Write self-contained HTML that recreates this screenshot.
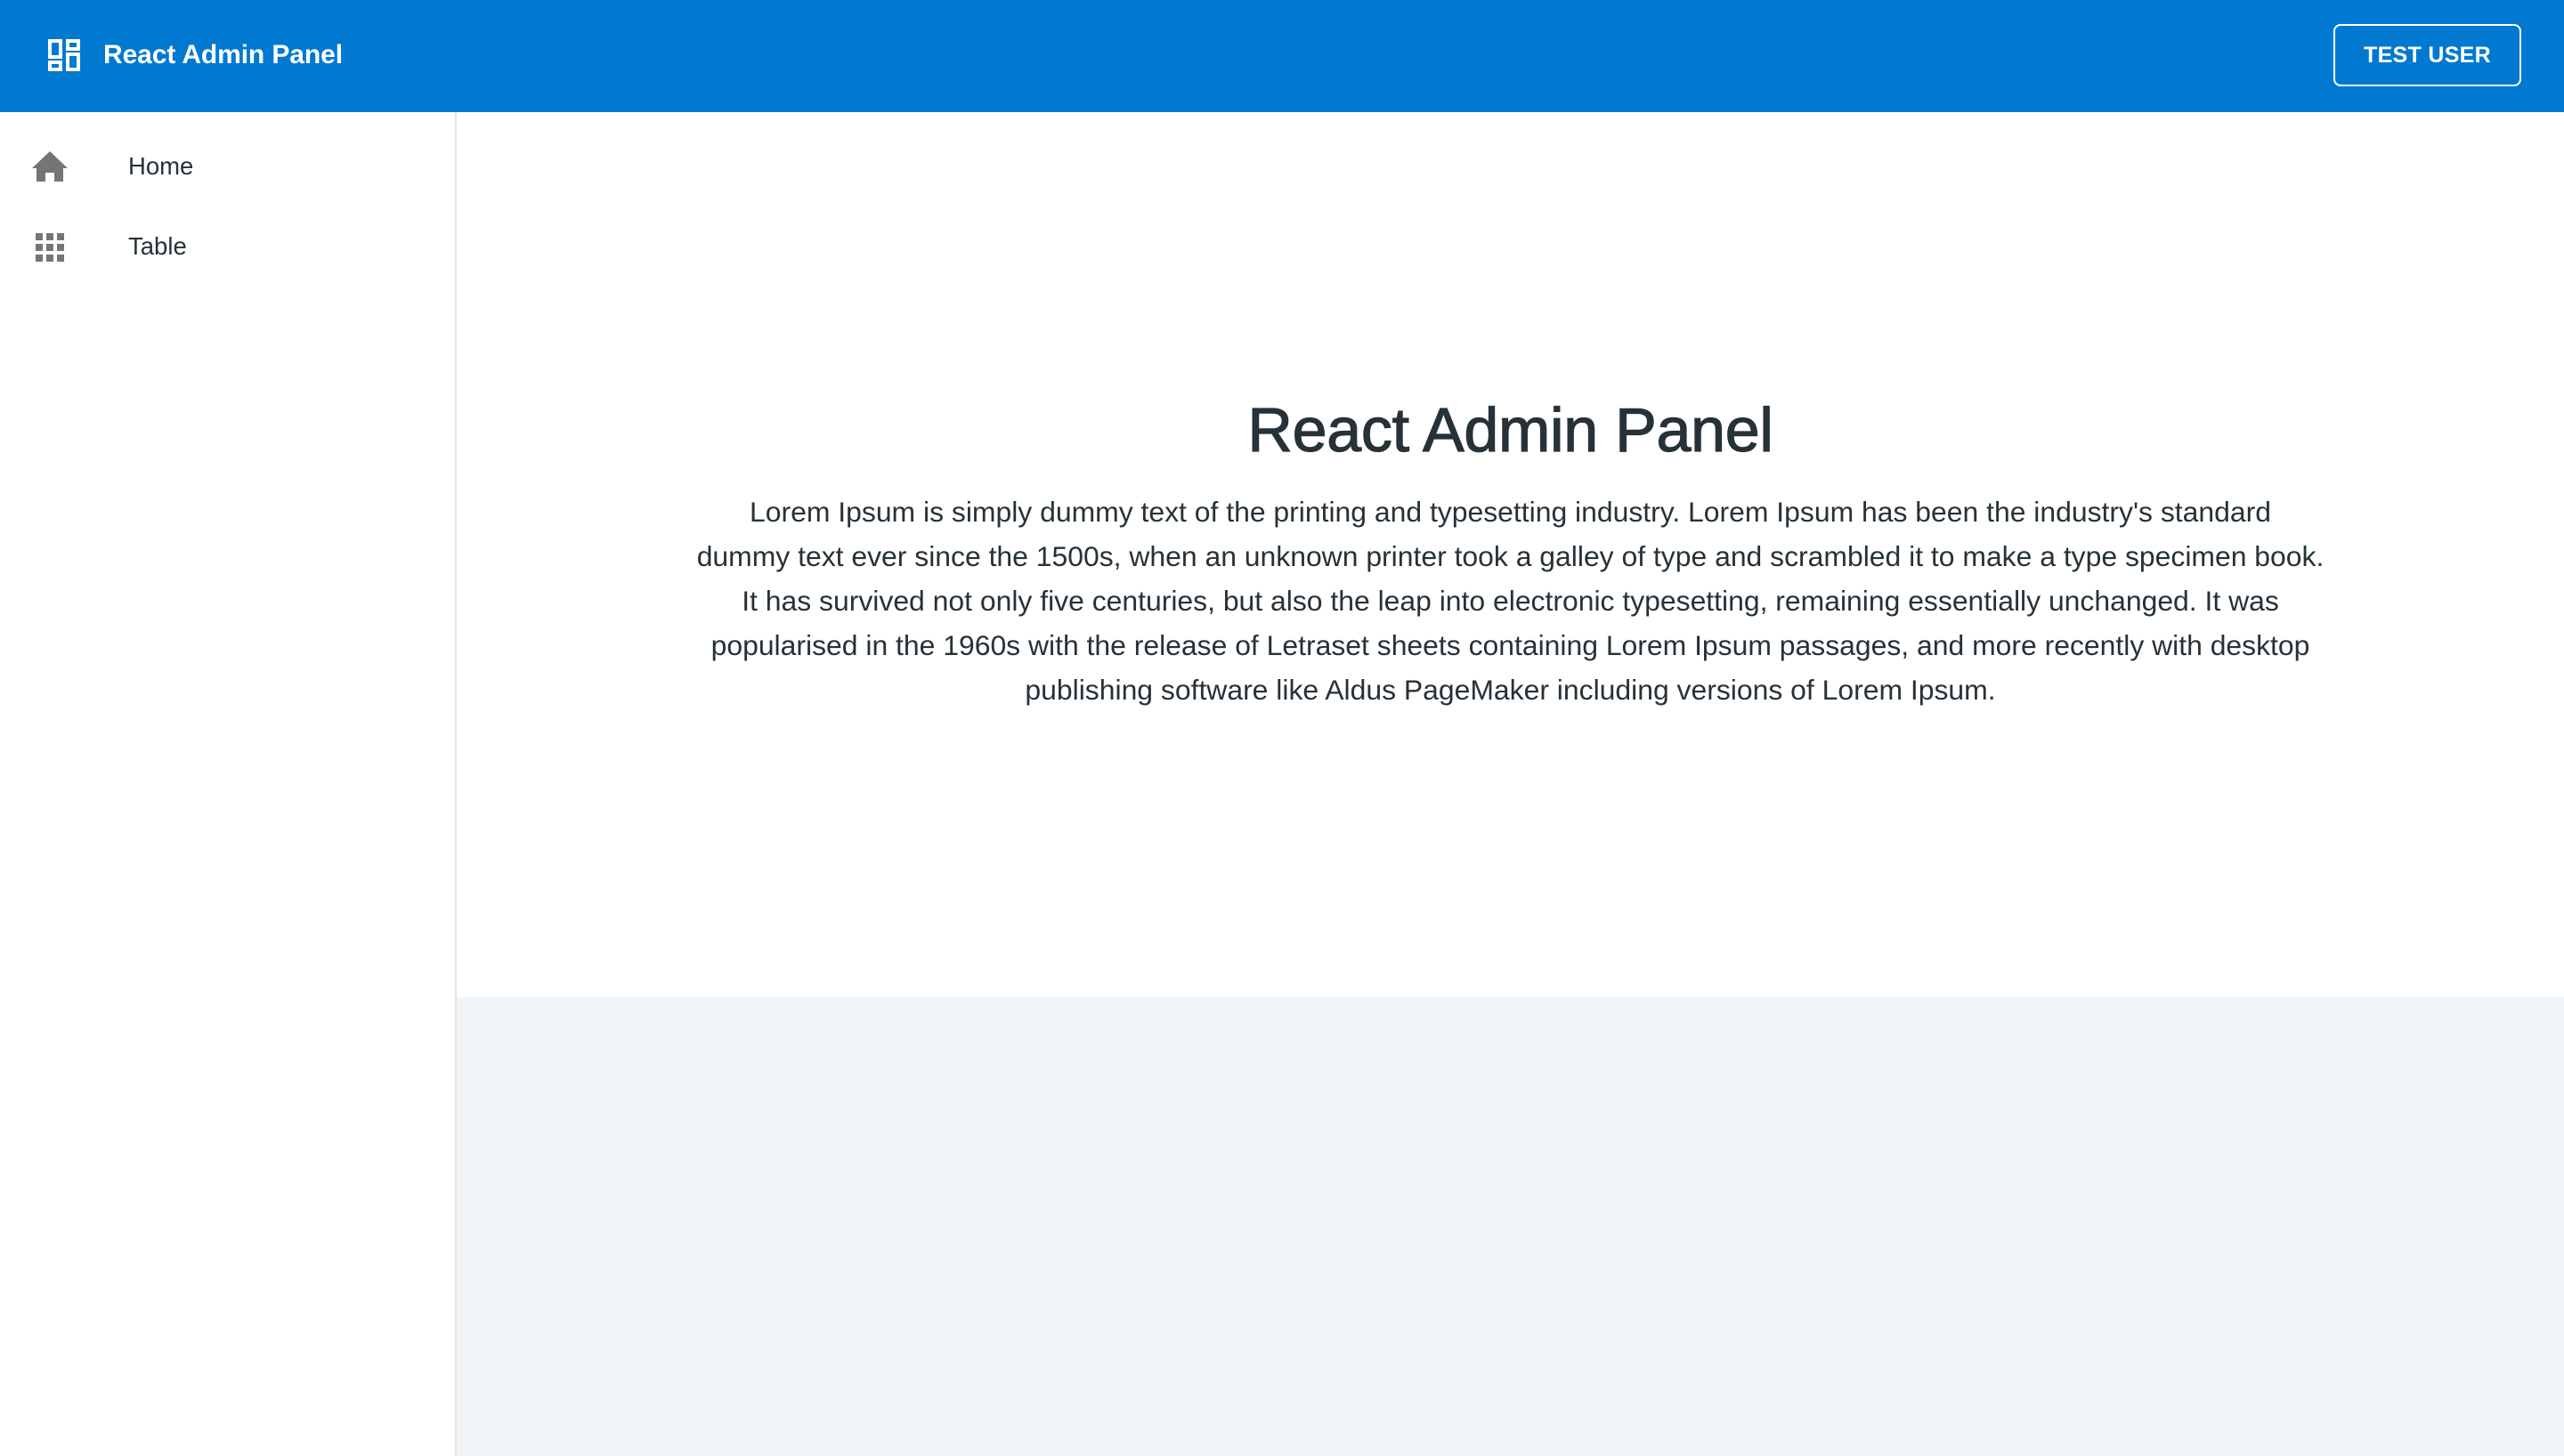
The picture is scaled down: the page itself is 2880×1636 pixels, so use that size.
<!DOCTYPE html>
<html><head><meta charset="utf-8"><style>
*{box-sizing:border-box;margin:0;padding:0}
body{width:2880px;height:1636px;overflow:hidden;font-family:"Liberation Sans",Roboto,sans-serif;background:#fff;position:relative}
.hdr{position:absolute;left:0;top:0;width:2880px;height:126px;background:#0179d0;}
.logo{position:absolute;left:54px;top:44px}
.ttl{position:absolute;left:116px;top:42px;color:#fff;font-size:30px;font-weight:bold;line-height:40px;letter-spacing:-0.1px}
.btn{position:absolute;left:2621px;top:27px;width:211px;height:70px;border:2px solid #fff;border-radius:8px;color:#fff;font-size:25px;font-weight:bold;text-align:center;line-height:66px;letter-spacing:0.3px}
.side{position:absolute;left:0;top:126px;width:513px;height:1510px;border-right:2px solid #e6e6e6;background:#fff}
.item{position:absolute;left:144px;font-size:27.5px;color:#263238;line-height:36px}
.gray{position:absolute;left:513px;top:1120px;width:2367px;height:516px;background:#f1f5f8}
h1{position:absolute;left:513px;width:2367px;top:438px;text-align:center;font-size:70px;font-weight:normal;-webkit-text-stroke:1.2px #263238;color:#263238;line-height:90px;letter-spacing:-0.3px}
p{position:absolute;left:513px;width:2367px;top:550px;text-align:center;font-size:31.9px;line-height:50px;color:#263238;white-space:nowrap}
</style></head><body>
<div class="hdr">
<svg class="logo" width="36" height="36" viewBox="0 0 36 36" fill="none" stroke="#fff" stroke-width="4"><rect x="2" y="2" width="12" height="18"/><rect x="22" y="2" width="12" height="9"/><rect x="2" y="26" width="12" height="8"/><rect x="22" y="17" width="12" height="17"/></svg>
<div class="ttl">React Admin Panel</div>
<div class="btn">TEST USER</div>
</div>
<div class="side">
<svg style="position:absolute;left:36px;top:44px" width="40" height="34" viewBox="0 0 40 34"><path d="M20 0L0 19h5v15h10V24h10v10h10V19h5z" fill="#757575"/></svg>
<div class="item" style="top:43px">Home</div>
<svg style="position:absolute;left:40px;top:136px" width="32" height="32" viewBox="0 0 32 32" fill="#757575"><rect x="0" y="0" width="8" height="8"/><rect x="12" y="0" width="8" height="8"/><rect x="24" y="0" width="8" height="8"/><rect x="0" y="12" width="8" height="8"/><rect x="12" y="12" width="8" height="8"/><rect x="24" y="12" width="8" height="8"/><rect x="0" y="24" width="8" height="8"/><rect x="12" y="24" width="8" height="8"/><rect x="24" y="24" width="8" height="8"/></svg>
<div class="item" style="top:133px">Table</div>
</div>
<div class="gray"></div>
<h1>React Admin Panel</h1>
<p>Lorem Ipsum is simply dummy text of the printing and typesetting industry. Lorem Ipsum has been the industry's standard<br>dummy text ever since the 1500s, when an unknown printer took a galley of type and scrambled it to make a type specimen book.<br>It has survived not only five centuries, but also the leap into electronic typesetting, remaining essentially unchanged. It was<br>popularised in the 1960s with the release of Letraset sheets containing Lorem Ipsum passages, and more recently with desktop<br>publishing software like Aldus PageMaker including versions of Lorem Ipsum.</p>
</body></html>
